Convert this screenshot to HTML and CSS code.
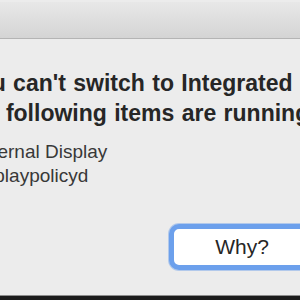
FILE: index.html
```html
<!DOCTYPE html>
<html lang="en">
<head>
    <meta charset="UTF-8">
    <title>Graphics Switch Alert</title>
    <link rel="stylesheet" href="styles.css">
</head>
<body>

    <!-- Alert window -->
    <div class="window">
        <div class="titlebar"></div>

        <div class="content">
            <p class="message">You can't switch to Integrated Graphics because the following items are running:</p>
            <ul class="items">
                <li>External Display</li>
                <li>displaypolicyd</li>
            </ul>
            <div class="actions">
                <button class="btn-default">Why?</button>
            </div>
        </div>
    </div>

    <!-- Desktop below the window -->
    <div class="desktop"></div>

</body>
</html>
```

FILE: styles.css
```css
/* General Reset */
* { margin: 0; padding: 0; box-sizing: border-box; }
body { width: 300px; height: 300px; overflow: hidden; font-family: 'Liberation Sans', Arial, sans-serif; background-color: #1b1b1b; }

/* Window */
.window { height: 296px; background-color: #ececec; border-bottom: 1px solid #8c8c8c; overflow: hidden; }
.titlebar { height: 39px; border-top: 2px solid #ececec; border-bottom: 1px solid #b4b4b4; background: linear-gradient(#e8e8e8, #d4d4d4); }

/* Content */
.content { padding-top: 29px; }
.message { width: 560px; margin-left: -36px; font-size: 23px; font-weight: 700; line-height: 30px; word-spacing: 1px; color: #262626; }
.items { list-style: none; margin-top: 12px; margin-left: -30px; font-size: 19px; line-height: 24px; color: #383838; white-space: nowrap; }

.actions { display: flex; margin-top: 36px; padding-left: 169px; }
.btn-default { width: 142px; height: 46px; flex-shrink: 0; padding-left: 4px; background-color: #fff; border: 5px solid #6ca0ec; border-radius: 10px; box-shadow: 0 0 0 1px rgba(108, 160, 236, 0.45); font-family: inherit; font-size: 21px; color: #262626; }
```
